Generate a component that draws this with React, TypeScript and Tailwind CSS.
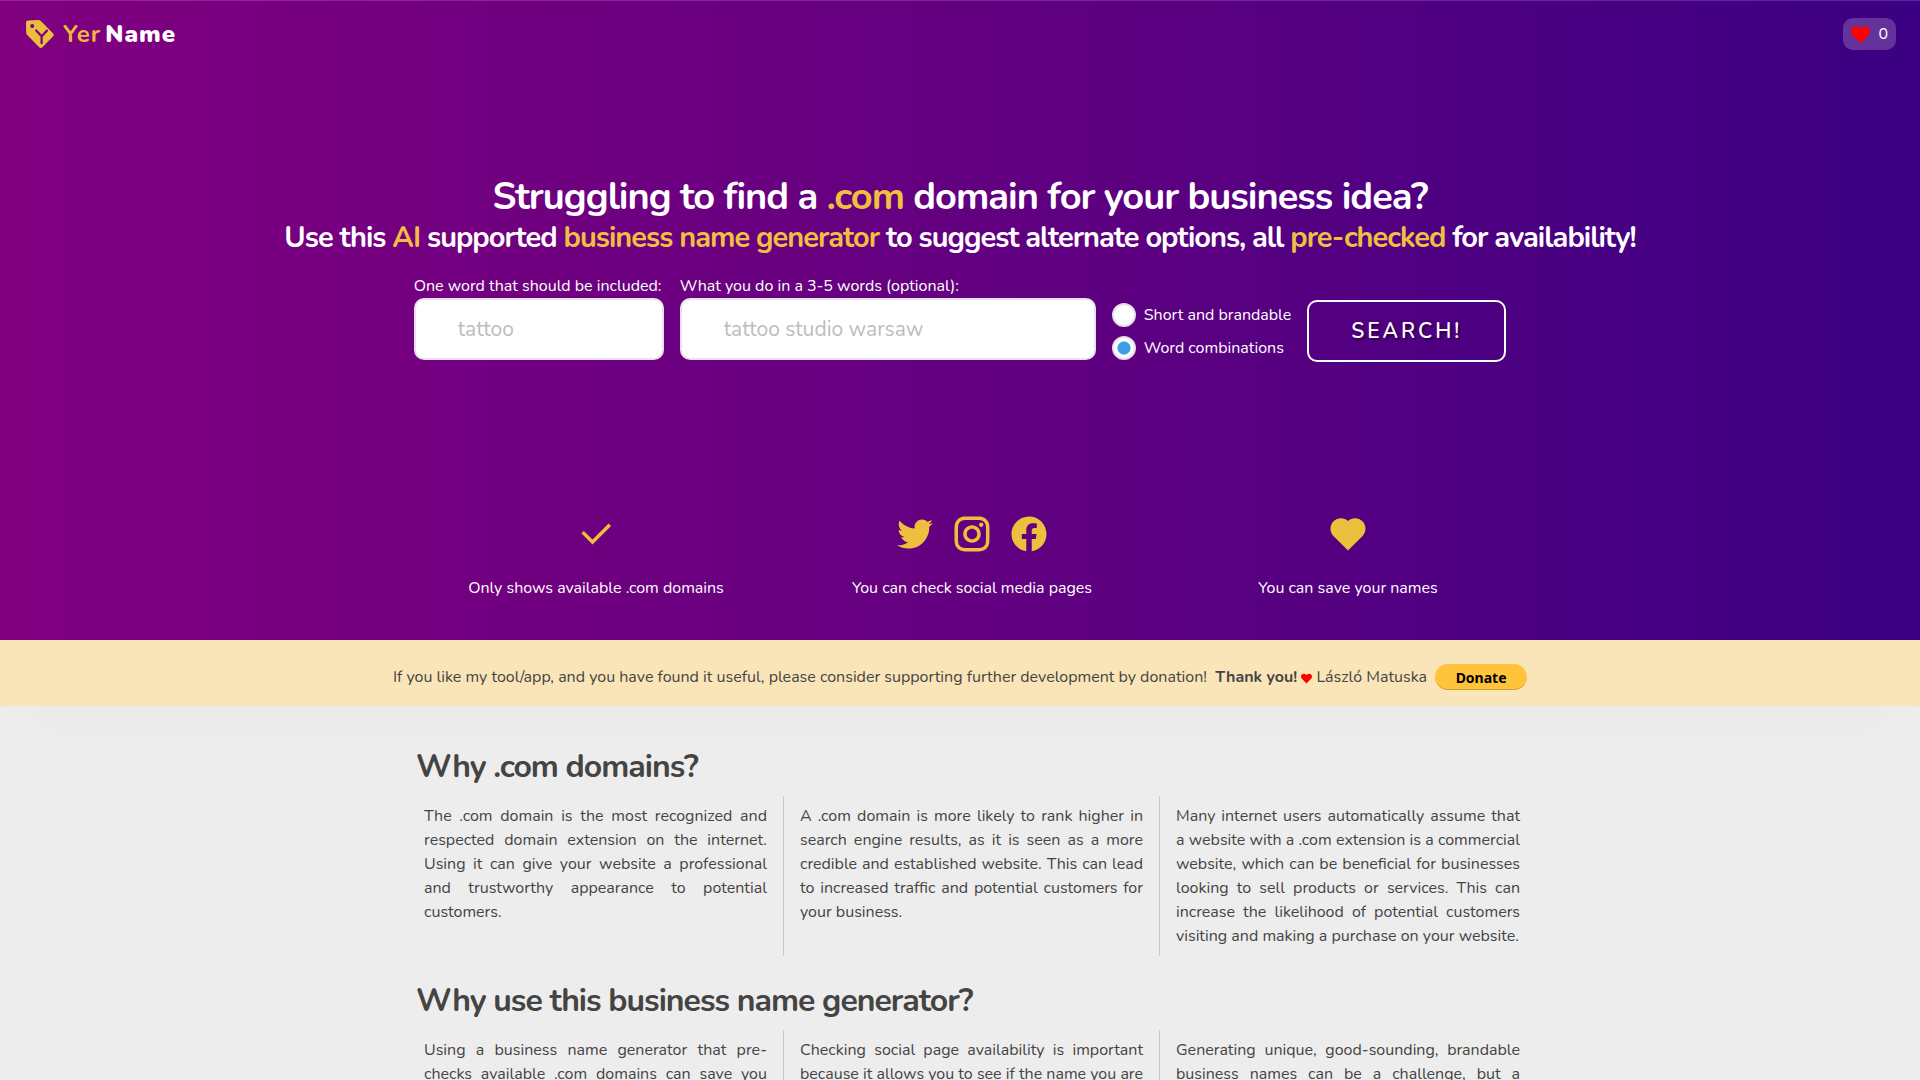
import type { ReactNode } from "react";
import {
  RiCheckLine,
  RiFacebookCircleFill,
  RiHeartFill,
  RiInstagramLine,
  RiTwitterFill,
} from "react-icons/ri";
import { FaHeart } from "react-icons/fa";

function Logo() {
  return (
    <svg viewBox="0 0 30 30" className="size-[30px]" aria-hidden="true">
      <path
        d="M3.2 1.4 13.8 1 15.6 1.8 28.2 14.4Q29.4 15.8 28.2 17.2L17.4 28.2Q15.8 29.6 14.2 28.2L2 15.8 1.2 14 1 3.4Q1.2 1.6 3.2 1.4Z"
        fill="#ecbd3c"
      />
      <circle cx="7.2" cy="7" r="2" fill="#7a0080" />
      <path
        d="M11.2 11.4 16.8 17.4M22 11.6 16.6 17.4V24.2"
        fill="none"
        stroke="#7a0080"
        strokeWidth="2.2"
        strokeLinecap="round"
      />
    </svg>
  );
}

function Gold({ children }: { children: ReactNode }) {
  return <span className="text-[#efbf42]">{children}</span>;
}

function Radio({ id, label, checked }: { id: string; label: string; checked?: boolean }) {
  return (
    <div className="flex h-[33px] items-center gap-2">
      <input
        type="radio"
        name="mode"
        id={id}
        defaultChecked={checked}
        className="size-6 appearance-none rounded-full border-2 border-[#e6dcea] bg-white checked:bg-[radial-gradient(circle,#3d9ee8_6px,#ffffff_7px)]"
      />
      <label htmlFor={id}>{label}</label>
    </div>
  );
}

const fieldStyle =
  "h-[62px] w-full rounded-[10px] border-2 border-[#e9e0ec] bg-white px-[42px] text-[21px] text-gray-700 placeholder:text-[#bdbdbd]";

function Feature({ icons, text }: { icons: ReactNode; text: string }) {
  return (
    <div className="flex flex-col items-center gap-[21px]">
      <div className="flex gap-[15px] text-[42px] text-[#ecbf3c]">{icons}</div>
      <p>{text}</p>
    </div>
  );
}

function Section({ title, texts, cont }: { title: string; texts: string[]; cont?: boolean }) {
  return (
    <section className="pt-[25px]">
      <h2 className="mb-[9px] pl-2 text-[32px] leading-10 font-bold tracking-[-1px]">{title}</h2>
      <div className="grid grid-cols-3 divide-x divide-[#c8c8c8]">
        {texts.map((text) => (
          <p
            key={text}
            className={cont ? "px-4 py-2 text-justify [text-align-last:justify]" : "px-4 py-2 text-justify"}
          >
            {text}
          </p>
        ))}
      </div>
    </section>
  );
}

export default function App() {
  return (
    <div className="min-h-screen bg-[#ededed] font-['Nunito','Open_Sans',sans-serif] text-base text-[#444444]">
      <div className="border-t border-white/15 bg-[linear-gradient(to_right,#800080,#630080_50%,#3b0083)] pb-10 text-white">
        <header className="flex h-[66px] items-center justify-between px-6">
          <a href="#" className="flex items-center gap-2 pl-px text-2xl tracking-[1px]">
            <Logo />
            <span className="flex gap-1">
              <span className="font-bold text-[#ecb841]">Yer</span>
              <span className="font-black">Name</span>
            </span>
          </a>
          <button
            type="button"
            aria-label="Saved names"
            className="flex h-8 items-center gap-2 rounded-[10px] bg-white/20 px-2"
          >
            <FaHeart className="text-[19px] text-[#ff0000]" />
            0
          </button>
        </header>

        <div className="mt-[107px] text-center font-bold tracking-[-1px]">
          <h1 className="text-[38px] leading-[46px]">
            Struggling to find a <Gold>.com</Gold> domain for your business idea?
          </h1>
          <p className="text-[29px] leading-9">
            Use this <Gold>AI</Gold> supported <Gold>business name generator</Gold> to suggest alternate options, all{" "}
            <Gold>pre-checked</Gold> for availability!
          </p>
        </div>

        <form className="mt-[18px] flex items-end justify-center gap-4" onSubmit={(e) => e.preventDefault()}>
          <div className="w-[250px] pb-0.5">
            <label htmlFor="word" className="block whitespace-nowrap">
              One word that should be included:
            </label>
            <input id="word" type="text" placeholder="tattoo" className={fieldStyle} />
          </div>
          <div className="w-[416px] pb-0.5">
            <label htmlFor="about" className="block">
              What you do in a 3-5 words (optional):
            </label>
            <input id="about" type="text" placeholder="tattoo studio warsaw" className={fieldStyle} />
          </div>
          <div className="-mb-0.5">
            <Radio id="short" label="Short and brandable" />
            <Radio id="combo" label="Word combinations" checked />
          </div>
          <button
            type="submit"
            className="h-[62px] rounded-[10px] border-2 border-white px-[42px] pt-0.5 text-[21px] font-semibold tracking-[3px] text-shadow-[2px_2px_2px_rgba(0,0,0,0.5)]"
          >
            SEARCH!
          </button>
        </form>

        <div className="mx-auto mt-[151px] grid max-w-[1152px] grid-cols-3 pl-6">
          <Feature icons={<RiCheckLine />} text="Only shows available .com domains" />
          <Feature
            icons={
              <>
                <RiTwitterFill />
                <RiInstagramLine />
                <RiFacebookCircleFill />
              </>
            }
            text="You can check social media pages"
          />
          <Feature icons={<RiHeartFill />} text="You can save your names" />
        </div>
      </div>

      <div className="flex items-center justify-center bg-[#fae5b9] pt-6 pb-4 shadow-[0_30px_60px_-30px_rgba(50,50,93,0.16)]">
        <p>
          If you like my tool/app, and you have found it useful, please consider supporting further development by
          donation!&nbsp; <strong className="font-bold">Thank you!</strong>{" "}
          <FaHeart className="inline text-[11px] text-[#ff0000]" /> László Matuska
        </p>
        <button
          type="button"
          className="ml-2 h-[26px] w-[92px] rounded-full border-b border-[#cf9b33] bg-[#ffc439] pt-0.5 font-['Noto_Sans',sans-serif] text-sm font-bold text-black"
        >
          Donate
        </button>
      </div>

      <main className="mx-auto max-w-[1152px] pt-4 pl-6">
        <Section
          title="Why .com domains?"
          texts={[
            "The .com domain is the most recognized and respected domain extension on the internet. Using it can give your website a professional and trustworthy appearance to potential customers.",
            "A .com domain is more likely to rank higher in search engine results, as it is seen as a more credible and established website. This can lead to increased traffic and potential customers for your business.",
            "Many internet users automatically assume that a website with a .com extension is a commercial website, which can be beneficial for businesses looking to sell products or services. This can increase the likelihood of potential customers visiting and making a purchase on your website.",
          ]}
        />
        <Section
          title="Why use this business name generator?"
          cont
          texts={[
            "Using a business name generator that pre-checks available .com domains can save you",
            "Checking social page availability is important because it allows you to see if the name you are",
            "Generating unique, good-sounding, brandable business names can be a challenge, but a",
          ]}
        />
      </main>
    </div>
  );
}
